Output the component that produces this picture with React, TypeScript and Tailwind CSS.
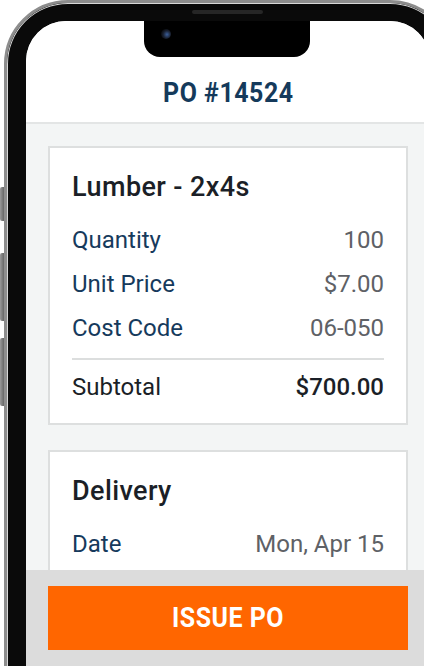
import type { ReactNode } from 'react';

const FONT = "font-['Roboto','Liberation_Sans',sans-serif]";

function Row({ label, value, strong }: { label: string; value: string; strong?: boolean }) {
  return (
    <div className="flex h-[44px] items-center justify-between">
      <span className={strong ? 'text-[#1b1f27]' : 'text-[#163a5c]'}>{label}</span>
      <span className={strong ? 'font-medium text-[#1b1f27]' : 'text-[#5e6166]'}>{value}</span>
    </div>
  );
}

function Card({ title, children }: { title: string; children: ReactNode }) {
  return (
    <section className="border-2 border-[#dddfdf] bg-white px-[22px] pt-[23px] pb-[14px]">
      <h2 className="mb-[15px] h-[32px] text-[27px] leading-[32px] font-medium tracking-[0.4px] text-[#1b1f27]">{title}</h2>
      {children}
    </section>
  );
}

function SideButtons() {
  return (
    <>
      <div className="absolute top-[187px] left-0 h-[34px] w-[5px] rounded-l-[2px] bg-gradient-to-r from-[#9a9a9a] to-[#5a5a5a]" />
      <div className="absolute top-[253px] left-0 h-[68px] w-[5px] rounded-l-[2px] bg-gradient-to-r from-[#9a9a9a] to-[#5a5a5a]" />
      <div className="absolute top-[338px] left-0 h-[68px] w-[5px] rounded-l-[2px] bg-gradient-to-r from-[#9a9a9a] to-[#5a5a5a]" />
    </>
  );
}

export default function App() {
  return (
    <div className={`relative h-[666px] w-[424px] overflow-hidden bg-white ${FONT}`}>
      <SideButtons />
      <div className="relative ml-[4px] h-[760px] w-[450px] rounded-[64px] border-[3px] border-[#8d8d8d] bg-[#0a0a0a] p-[18px] pl-[19px] shadow-[inset_0_0_0_1px_#d8d8d8]">
        {/* speaker */}
        <div className="absolute top-[7px] left-[185px] h-[4px] w-[71px] rounded-full bg-[#262626]" />

        <div className="relative flex h-[740px] w-[404px] flex-col overflow-hidden rounded-[40px] bg-[#f3f5f5]">
          {/* notch */}
          <div className="absolute top-0 left-[118px] z-10 h-[36px] w-[166px] rounded-b-[16px] bg-black">
            <div className="absolute top-[8px] left-[17px] h-[10px] w-[10px] rounded-full bg-[radial-gradient(circle_at_60%_55%,#3b5f9a_0,#1a2233_45%,#0b0d12_70%)]" />
          </div>

          <header className="flex h-[103px] shrink-0 items-end justify-center border-b-2 border-[#e3e5e5] bg-white pb-[13px]">
            <h1 className="scale-x-[0.89] text-[28px] leading-[32px] font-bold tracking-[0.6px] text-[#153a5b]">
              PO #14524
            </h1>
          </header>

          <main className="flex h-[446px] shrink-0 flex-col gap-[25px] overflow-hidden px-[22px] pt-[22px] text-[24px]">
            <Card title="Lumber - 2x4s">
              <Row label="Quantity" value="100" />
              <Row label="Unit Price" value="$7.00" />
              <Row label="Cost Code" value="06-050" />
              <div className="mt-[8px] mb-[5px] h-[2px] bg-[#dcdede]" />
              <Row label="Subtotal" value="$700.00" strong />
            </Card>
            <Card title="Delivery">
              <Row label="Date" value="Mon, Apr 15" />
            </Card>
          </main>

          <footer className="flex-1 bg-[#dcdcdc] px-[22px] pt-[16px]">
            <button className="flex h-[64px] w-full items-center justify-center bg-[#ff6600] leading-none">
              <span className="scale-x-[0.89] text-[28px] leading-[32px] font-bold tracking-[0.6px] text-white">ISSUE PO</span>
            </button>
          </footer>
        </div>
      </div>
    </div>
  );
}
